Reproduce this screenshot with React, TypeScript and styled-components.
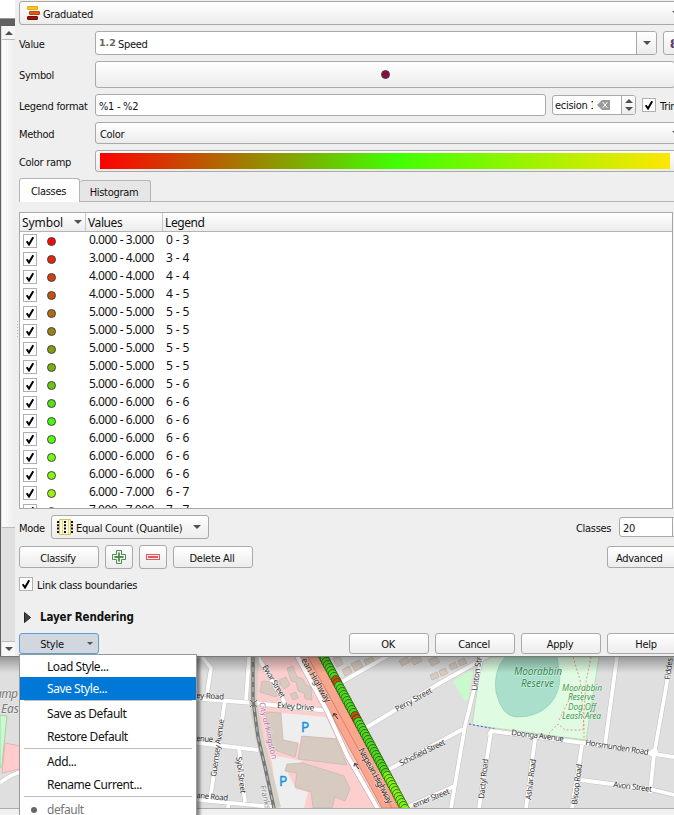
import React from "react";
import styled, { createGlobalStyle, css } from "styled-components";

const Global = createGlobalStyle`
  * { box-sizing: border-box; }
  body { margin: 0; background: #efefef; font-family: "DejaVu Sans Condensed", "DejaVu Sans", sans-serif; font-stretch: condensed; font-size: 11px; color: #111; }
`;

const raised = css`
  border: 1px solid #a9a9a9;
  border-radius: 3px;
  background: linear-gradient(#ffffff, #ececec);
`;

const Screen = styled.div`
  position: relative;
  width: 674px;
  height: 815px;
  overflow: hidden;
  display: flex;
  flex-direction: column;
`;
const Window = styled.div`
  display: flex;
  height: 657px;
  flex: none;
  border-bottom: 1px solid #777;
`;
const Side = styled.div`
  width: 15px;
  flex: none;
  display: flex;
  flex-direction: column;
  background: #606060;
`;
const Corner = styled.div`
  height: 19px;
  background: #fff;
  border-bottom: 1px solid #999;
`;
const Scrollbar = styled.div`
  margin: 7px 0 0 1px;
  padding-left: 1px;
  flex: 1;
  display: flex;
  flex-direction: column;
  background: #e0e0e0;
`;
const ScrollArrow = styled.div<{ $h: number }>`
  height: ${(p) => p.$h}px;
  background: #f6f6f6;
  border: solid #bbb;
  border-width: ${(p) => (p.$h === 14 ? "0 0 1px" : "1px 0 0")};
  display: flex;
  align-items: center;
  justify-content: center;
`;
const Thumb = styled.div`
  height: 488px;
  background: linear-gradient(90deg, #fcfcfc, #eeeeee);
  border-bottom: 1px solid #bbb;
`;
const Track = styled.div`
  flex: 1;
`;
const Panel = styled.div`
  width: 680px;
  flex: none;
  padding: 1px 0 0 4px;
  background: repeating-linear-gradient(#b5b5b5 0 1px, transparent 1px 3px) 2px 321px / 1px 16px no-repeat #efefef;
`;
const Row = styled.div<{ $h: number; $mt?: number }>`
  display: flex;
  height: ${(p) => p.$h}px;
  margin-top: ${(p) => p.$mt ?? 0}px;
`;
const T = styled.span`
  white-space: pre;
  line-height: 15px;
  margin: 1px 0 -1px;
  letter-spacing: -0.3px;
`;
const UiText = styled.span<{ $up?: number; $ls?: number }>`
  font-family: "Noto Sans", sans-serif;
  font-size: 12px;
  line-height: 15px;
  white-space: pre;
  letter-spacing: ${(p) => p.$ls ?? -0.45}px;
  margin-bottom: ${(p) => p.$up ?? 0}px;
`;
const Label = styled.div`
  width: 76px;
  flex: none;
  display: flex;
  align-items: center;
`;
const Wide = styled.div<{ $pad?: number }>`
  ${raised}
  flex: none;
  width: 585px;
  padding-left: ${(p) => p.$pad ?? 4}px;
  display: flex;
  align-items: center;
`;
const GraduatedBox = styled(Wide)`
  width: 672px;
  padding-left: 7px;
  gap: 2px;
`;
const DownSlot = styled.div<{ $mr?: number }>`
  display: flex;
  margin-left: auto;
  margin-right: ${(p) => p.$mr ?? 10}px;
`;
const Field = styled.div<{ $w: number }>`
  width: ${(p) => p.$w}px;
  flex: none;
  border: 1px solid #a9a9a9;
  border-radius: 3px;
  background: #fff;
  display: flex;
  align-items: center;
  padding-left: 3px;
  overflow: hidden;
`;
const NumType = styled.b`
  font-family: "DejaVu Sans", sans-serif;
  font-size: 9.5px;
  font-stretch: normal;
  line-height: 12px;
  color: #666;
  width: 19px;
`;
const ClipText = styled.div`
  width: 38px;
  flex: none;
  display: flex;
  overflow: hidden;
  margin: 0 4px 0 -1px;
  padding-bottom: 1px;
`;
const Stepper = styled.div<{ $w: number }>`
  width: ${(p) => p.$w}px;
  height: 100%;
  margin-left: auto;
  flex: none;
  border-left: 1px solid #a9a9a9;
  background: linear-gradient(#fff, #ececec);
  display: flex;
  align-items: center;
  justify-content: center;
`;
const Epsilon = styled.div`
  ${raised}
  width: 28px;
  margin-left: 6px;
  padding-left: 6px;
  color: #5b4068;
  font: bold 18px/20px "Liberation Serif", serif;
`;
const SymbolButton = styled(Wide)`
  width: 580px;
  padding: 0;
  justify-content: center;
`;
const Ramp = styled.div`
  width: 570px;
  height: 16px;
  background: linear-gradient(90deg, #f00 0%, #40ff00 52%, #ffe600 100%);
`;
const Tabs = styled.div`
  display: flex;
  align-items: flex-end;
  height: 24px;
  margin-top: 6px;
  border-bottom: 1px solid #b4b4b4;
`;
const Tab = styled.div<{ $on?: boolean }>`
  width: ${(p) => (p.$on ? 61 : 71)}px;
  height: ${(p) => (p.$on ? 24 : 21)}px;
  margin-bottom: ${(p) => (p.$on ? -1 : 0)}px;
  padding-right: 2px;
  border: 1px solid #b4b4b4;
  border-width: ${(p) => (p.$on ? "1px 1px 0" : "1px 1px 0 0")};
  border-radius: 3px 3px 0 0;
  background: ${(p) => (p.$on ? "linear-gradient(#fff,#fdfdfd)" : "#e6e6e6")};
  display: flex;
  align-items: center;
  justify-content: center;
`;
const Table = styled.div`
  width: 654px;
  height: 297px;
  margin-top: 10px;
  border: 1px solid #a9a9a9;
  background: #fff;
  overflow: hidden;
`;
const Head = styled.div`
  display: grid;
  grid-template-columns: 66px 77px 1fr;
  height: 19px;
  border-bottom: 1px solid #b4b4b4;
  background: linear-gradient(#fff, #ececec);
`;
const HeadCell = styled.div`
  display: flex;
  align-items: center;
  justify-content: space-between;
  padding: 0 3px 0 2px;
  border-right: 1px solid #c8c8c8;
  &:last-child { border-right: 0; }
`;
const ClassRow = styled.div`
  display: grid;
  grid-template-columns: 24px 42px 77px 1fr;
  height: 18px;
  padding-left: 3px;
  align-items: center;
`;
const CheckBox = styled.span`
  width: 14px;
  height: 14px;
  flex: none;
  border: 1px solid #b0b0b0;
  background: #fff;
  display: flex;
  align-items: center;
  justify-content: center;
`;
const RowCheck = styled(CheckBox)``;
const Dot = styled.i<{ $c: string }>`
  width: 9px;
  height: 9px;
  border-radius: 50%;
  border: 1px solid #444;
  background: ${(p) => p.$c};
`;
const RowDot = styled(Dot)`
  margin: 1px 0 0 0;
`;
const Button = styled.div<{ $w: number; $ml?: number; $on?: boolean }>`
  ${raised}
  width: ${(p) => p.$w}px;
  height: 100%;
  margin-left: ${(p) => p.$ml ?? 0}px;
  flex: none;
  display: flex;
  align-items: center;
  justify-content: center;
  padding-right: 2px;
  ${(p) => p.$on && "background:#d0d7df;border-color:#5ba3d6;"}
`;
const ModeBox = styled(Button)`
  justify-content: flex-start;
  padding-left: 4px;
  gap: 2px;
`;
const ToolButton = styled(Button)`
  height: 24px;
  margin-top: -1px;
  padding: 0;
`;
const Inline = styled.div<{ $w?: number; $gap?: number; $ml?: number }>`
  display: flex;
  align-items: center;
  flex: none;
  width: ${(p) => (p.$w ? p.$w + "px" : "auto")};
  gap: ${(p) => p.$gap ?? 0}px;
  margin-left: ${(p) => p.$ml ?? 0}px;
`;
const Bold = styled.b`
  font-size: 11.5px;
  letter-spacing: -0.15px;
  line-height: 16px;
  white-space: pre;
`;
const MapView = styled.svg`
  display: block;
  width: 674px;
  height: 151px;
  flex: none;
  font-family: "Noto Sans", sans-serif;
  font-stretch: normal;
`;
const StatusBar = styled.div`
  height: 7px;
  border-top: 1px solid #aaa;
  background: #f0f0f0;
`;
const Menu = styled.div`
  position: absolute;
  left: 19px;
  top: 654px;
  width: 178px;
  height: 170px;
  border: 1px solid #999;
  background: #fff;
  box-shadow: 3px 3px 3px rgba(0, 0, 0, 0.45);
`;
const Item = styled.div<{ $on?: boolean; $dim?: boolean }>`
  height: 23px;
  padding-left: 27px;
  display: flex;
  align-items: center;
  background: ${(p) => (p.$on ? "#0078d7" : "transparent")};
  color: ${(p) => (p.$on ? "#fff" : p.$dim ? "#777" : "#111")};
  &:first-child { height: 22px; }
`;
const Bullet = styled.i`
  width: 6px;
  height: 6px;
  border-radius: 50%;
  background: #666;
  margin: 0 10px 0 -16px;
`;
const Sep = styled.div`
  height: 1px;
  margin: 0 4px 1px;
  background: #bdbdbd;
`;

const Arrow = ({ up, w = 8 }: { up?: boolean; w?: number }) => (
  <svg width={w} height={w / 2} viewBox="0 0 8 4">
    <path d={up ? "M0 4L4 0L8 4Z" : "M0 0L4 4L8 0Z"} fill="#505050" />
  </svg>
);
const Tick = () => (
  <svg width="10" height="10" viewBox="0 0 10 10">
    <path d="M1.7 5.2L4 8.5L8.2 1.2" fill="none" stroke="#000" strokeWidth="2" />
  </svg>
);

const classes: [string, string, string][] = [
  ["0.000 - 3.000", "0 - 3", "#f40808"],
  ["3.000 - 4.000", "3 - 4", "#e32410"],
  ["4.000 - 4.000", "4 - 4", "#d2400c"],
  ["4.000 - 5.000", "4 - 5", "#c0540c"],
  ["5.000 - 5.000", "5 - 5", "#ae6c10"],
  ["5.000 - 5.000", "5 - 5", "#9b8110"],
  ["5.000 - 5.000", "5 - 5", "#889a10"],
  ["5.000 - 5.000", "5 - 5", "#78ae10"],
  ["5.000 - 6.000", "5 - 6", "#68c810"],
  ["6.000 - 6.000", "6 - 6", "#55e010"],
  ["6.000 - 6.000", "6 - 6", "#44fa10"],
  ["6.000 - 6.000", "6 - 6", "#58fb10"],
  ["6.000 - 6.000", "6 - 6", "#70fa10"],
  ["6.000 - 6.000", "6 - 6", "#84f610"],
  ["6.000 - 7.000", "6 - 7", "#9cf210"],
  ["7.000 - 7.000", "7 - 7", "#b0f010"],
];

const track = Array.from({ length: 52 }, (_, i) => {
  const t = i / 51;
  const y = 656 + t * 153;
  const orange = (y > 679 && y < 686) || (y > 715 && y < 722);
  return { x: 323 + t * 82, y, c: orange ? "#c2500f" : t > 0.78 ? "#86f21a" : "#55d622" };
});

const Streets = ({ color, width }: { color: string; width: number }) => (
  <g fill="none" stroke={color} strokeWidth={width} strokeLinejoin="round">
    <path d="M202 657L211 668L207 694" />
    <path d="M190 698L254 703L330 711" />
    <path d="M249 657L246 700" />
    <path d="M258 657L285 703" />
    <path d="M225 700L210 800" />
    <path d="M190 742L258 750" />
    <path d="M239 748L245 802" />
    <path d="M190 799L272 807M229 802L228 808" />
    <path d="M340 683L398 650" />
    <path d="M364 729L440 683L490 655" />
    <path d="M388 770L463 729" />
    <path d="M405 808L455 786" />
    <path d="M482 657L465 726L451 808" />
    <path d="M489 735L491 731L584 743L674 757" />
    <path d="M491 732L479 808M535 739L526 808M582 745L572 808" />
    <path d="M617 657L605 745" />
    <path d="M670 665L654 755L650 793" />
    <path d="M581 780L650 789L674 795" />
    <path d="M0 783Q8 776 20 772" />
  </g>
);

const MapLabel = ({ x, y, a = 0, s = 8, w, c = "#333", i, children }: { x: number; y: number; a?: number; s?: number; w: number; c?: string; i?: boolean; children: string }) => (
  <text
    transform={`translate(${x} ${y}) rotate(${a})`}
    fontSize={s}
    textLength={w}
    fontStyle={i ? "italic" : "normal"}
    fill={c}
    stroke="#fff"
    strokeOpacity="0.5"
    strokeWidth="1.2"
    paintOrder="stroke"
  >
    {children}
  </text>
);

const StreetMap = () => (
  <MapView viewBox="0 657 674 151">
    <defs>
      <linearGradient id="shade" x1="0" y1="0" x2="0" y2="1">
        <stop offset="0" stopColor="#000" stopOpacity=".42" />
        <stop offset="1" stopColor="#000" stopOpacity="0" />
      </linearGradient>
    </defs>
    <rect y="657" width="674" height="151" fill="#e0dfdf" />
    <path d="M0 715L7 716L2 765L0 768Z" fill="#c8facc" stroke="#a6cfab" />
    <path d="M5 743L20 746V769L2 773Z" fill="#ffcccb" stroke="#e0b5b5" />
    <path d="M258 657H300L385 808H278L262 735L256 705Z" fill="#fccfce" />
    <path d="M281 713L326 717L336 738L301 736L300 744L281 740Z M271 755L303 761L286 769L296 789L308 792L304 808H278Z" fill="#eeeeee" />
    <g fill="#d6cac1" stroke="#c4b7ad" strokeWidth=".7">
      <path d="M262 681L281 683L276 697L260 692Z" />
      <path d="M266 712L281 713L283 740L298 743L295 757L269 748Z" />
      <path d="M302 736L336 739L347 765L298 759Z" />
      <path d="M287 764L303 763L319 768L344 776L350 789L345 801L335 797L332 808H313L311 792L295 787L297 773L285 771Z" />
      <path d="M287 668L293 666L297 677L303 679L306 685L311 687L312 700L305 699L304 693L298 691L296 682L291 681Z" />
      <path d="M279 680L286 677L290 685L284 689Z M290 694L296 692L298 698L293 700Z" />
    </g>
    <g fill="#d6cac1" stroke="#bcb0a8" strokeWidth=".7">
      <path d="M333 658l7 -1l3 7l-6 3zM342 670l7 -4l3 6l-7 4zM351 664l8 -4l4 6l-8 5zM364 660l8 -3l3 5l-8 5z" />
      <path d="M399 661l8 -4l3 5l-8 4zM410 659l9 -3l3 5l-8 4zM430 675l7 -3l2 5l-7 3zM439 671l6 -3l3 5l-7 3zM449 665l6 -3l3 5l-7 3zM458 661l6 -3l3 5l-7 3z" />
      <path d="M486 658h11l-5 5zM428 660l8 -3l4 5l-8 4z" />
    </g>
    <path d="M453 681L473 669L468 700L465 701Z" fill="#c8facc" />
    <path d="M482 657H599L586 740L472 725Z" fill="#dffce2" stroke="#afd9b2" strokeWidth=".8" />
    <path d="M505 657Q493 671 496 692Q502 717 517 717Q538 717 550 704Q560 693 560 675L557 657Z" fill="#aae0cb" stroke="#8bceb6" strokeWidth=".7" />
    <g fill="none" stroke="#fa8072" strokeDasharray="2 2" strokeWidth=".9">
      <path d="M573 657L580 680L581 688L584 725V740" />
      <path d="M591 657L586 682L583 730H565L558 724L549 733" />
      <path d="M576 686L559 720" />
    </g>
    <path d="M469 724L495 729" fill="none" stroke="#4848ee" strokeDasharray="2 2" strokeWidth="1" />
    <Streets color="#c9c4c2" width={5} />
    <Streets color="#fff" width={3.8} />
    <circle cx="654" cy="753" r="4" fill="#fff" />
    <path d="M255 657L253 702L260 740L268 770L277 808" fill="none" stroke="#d5d0c6" strokeWidth="8" />
    <path d="M253 657V700L258 737L265 767L274 808" fill="none" stroke="#777" strokeWidth="3.4" />
    <path d="M253 657V700L258 737L265 767L274 808" fill="none" stroke="#bbb" strokeWidth="1.2" strokeDasharray="5 5" />
    <path d="M250 700l7 7m0 -7l-7 7" stroke="#777" />
    <path d="M300 657L382 808H404L323 657Z" fill="#faa58d" stroke="#d78872" strokeWidth="1" />
    <path d="M297 656L327 711L348 757L378 809" fill="none" stroke="#bbaaa5" strokeWidth="5.4" />
    <path d="M297 656L327 711L348 757L378 809" fill="none" stroke="#fff" strokeWidth="4.2" />
    <path d="M308 657L360 752L392 808" fill="none" stroke="#d47c66" strokeWidth=".9" />
    <path d="M338 719l-4 -5M333 716.500l.5 -3l3.500 1M359 769l-4 -5M354 766.500l.5 -3l3.500 1" fill="none" stroke="#333" strokeWidth="1" />
    <g stroke="#174d0b" strokeWidth=".75">
      {track.map((p, k) => (
        <circle key={k} cx={p.x} cy={p.y} r="4.5" fill={p.c} />
      ))}
    </g>
    <g>
      <MapLabel x={-5} y={698} s={12} w={23} c="#777" i>amp</MapLabel>
      <MapLabel x={1} y={713} s={12} w={18} c="#777" i>Eas</MapLabel>
      <MapLabel x={196} y={698} a={3} w={28}>ey Road</MapLabel>
      <MapLabel x={196} y={741} a={3} w={17}>enue</MapLabel>
      <MapLabel x={216} y={777} a={-82} w={58}>Guernsey Avenue</MapLabel>
      <MapLabel x={236} y={757} a={83} w={37}>Sybil Street</MapLabel>
      <MapLabel x={196} y={798} a={5} w={32}>ane Road</MapLabel>
      <MapLabel x={262} y={667} a={59} w={37}>Ewar Street</MapLabel>
      <MapLabel x={277} y={708} a={4} w={37}>Exley Drive</MapLabel>
      <MapLabel x={259} y={703} a={77} w={58} c="#b070b0">City of Kingston</MapLabel>
      <MapLabel x={260} y={786} a={77} w={24} c="#888">Franks</MapLabel>
      <MapLabel x={301} y={660} a={60} s={9} w={50}>ean Highway</MapLabel>
      <MapLabel x={358} y={750} a={61} s={9} w={62}>Nepean Highway</MapLabel>
      <MapLabel x={397} y={712} a={-29} w={41}>Perry Street</MapLabel>
      <MapLabel x={401} y={766} a={-26} w={50}>Schofield Street</MapLabel>
      <MapLabel x={414} y={808} a={-22} w={39}>erner Street</MapLabel>
      <MapLabel x={477} y={691} a={-82} w={34}>Linton Str</MapLabel>
      <MapLabel x={511} y={735} a={7} w={53}>Doonga Avenue</MapLabel>
      <MapLabel x={585} y={745} a={9} w={64}>Horsmunden Road</MapLabel>
      <MapLabel x={484} y={799} a={-84} w={40}>Dactyl Road</MapLabel>
      <MapLabel x={531} y={800} a={-83} w={41}>Ashlar Road</MapLabel>
      <MapLabel x={577} y={805} a={-83} w={41}>Biscop Road</MapLabel>
      <MapLabel x={613} y={787} a={7} w={39}>Avon Street</MapLabel>
      <MapLabel x={670} y={680} a={-83} w={22}>Fiddes</MapLabel>
      <MapLabel x={514} y={675} s={10} w={48} c="#2f8a4e" i>Moorabbin</MapLabel>
      <MapLabel x={521} y={687} s={10} w={33} c="#2f8a4e" i>Reserve</MapLabel>
      <MapLabel x={562} y={691} s={8.4} w={40} c="#3d9a4c" i>Moorabbin</MapLabel>
      <MapLabel x={568} y={700} s={8.4} w={27} c="#3d9a4c" i>Reserve</MapLabel>
      <MapLabel x={568} y={710} s={8.4} w={28} c="#3d9a4c" i>Dog Off</MapLabel>
      <MapLabel x={562} y={719} s={8.4} w={39} c="#3d9a4c" i>Leash Area</MapLabel>
    </g>
    <g fill="#1b93dc" stroke="#1b93dc" strokeWidth=".4" fontSize="13.5">
      <text x="301" y="732">P</text>
      <text x="279" y="786">P</text>
    </g>
    <rect y="657" width="674" height="16" fill="url(#shade)" opacity=".75" />
  </MapView>
);

export default function App() {
  return (
    <Screen>
      <Global />
      <Window>
        <Side>
          <Corner />
          <Scrollbar>
            <ScrollArrow $h={14}><Arrow up /></ScrollArrow>
            <Thumb />
            <Track />
            <ScrollArrow $h={15}><Arrow /></ScrollArrow>
          </Scrollbar>
        </Side>
        <Panel>
          <Row $h={24}>
            <GraduatedBox>
              <svg width="14" height="14" viewBox="0 0 14 14">
                <rect x=".5" y=".5" width="10" height="3" rx=".4" fill="#fccb18" stroke="#e2a90c" />
                <rect x="2.5" y="5.5" width="10" height="3" rx=".4" fill="#e35b18" stroke="#bd4208" />
                <rect x=".5" y="10.5" width="10" height="3" rx=".4" fill="#9c130c" stroke="#760a04" />
              </svg>
              <T>Graduated</T>
              <DownSlot><Arrow /></DownSlot>
            </GraduatedBox>
          </Row>
          <Row $h={24} $mt={6}>
            <Label><T>Value</T></Label>
            <Field $w={562}>
              <NumType>1.2</NumType>
              <T>Speed</T>
              <Stepper $w={20}><Arrow /></Stepper>
            </Field>
            <Epsilon>ε</Epsilon>
          </Row>
          <Row $h={27} $mt={6}>
            <Label><T>Symbol</T></Label>
            <SymbolButton><Dot $c="#900848" /></SymbolButton>
          </Row>
          <Row $h={22} $mt={6}>
            <Label><T>Legend format</T></Label>
            <Field $w={451}><T>%1 - %2</T></Field>
            <Inline $ml={6}>
              <Row $h={20}>
                <Field $w={84}>
                  <ClipText><T>ecision 1</T></ClipText>
                  <svg width="14" height="10" viewBox="0 0 14 10">
                    <path d="M5 0H13V10H5L0 5Z" fill="#999" />
                    <path d="M5.5 2L10.5 8M10.5 2L5.5 8" stroke="#fff" />
                  </svg>
                  <Stepper $w={14}>
                    <svg width="8" height="12" viewBox="0 0 8 12">
                      <path d="M0 4L4 0L8 4ZM0 8L4 12L8 8Z" fill="#505050" />
                    </svg>
                  </Stepper>
                </Field>
              </Row>
            </Inline>
            <Inline $ml={6} $gap={4}><CheckBox><Tick /></CheckBox><T>Trim</T></Inline>
          </Row>
          <Row $h={22} $mt={6}>
            <Label><T>Method</T></Label>
            <Wide><T>Color</T><DownSlot $mr={-1}><Arrow /></DownSlot></Wide>
          </Row>
          <Row $h={22} $mt={6}>
            <Label><T>Color ramp</T></Label>
            <Wide><Ramp /></Wide>
          </Row>
          <Tabs>
            <Tab $on><T>Classes</T></Tab>
            <Tab><T>Histogram</T></Tab>
          </Tabs>
          <Table>
            <Head>
              <HeadCell><UiText $ls={-0.1}>Symbol</UiText><Arrow /></HeadCell>
              <HeadCell><UiText $ls={-0.4}>Values</UiText></HeadCell>
              <HeadCell><UiText $ls={-0.4}>Legend</UiText></HeadCell>
            </Head>
            {classes.map(([v, l, c], k) => (
              <ClassRow key={k}>
                <RowCheck><Tick /></RowCheck>
                <RowDot $c={c} />
                <UiText $up={3} $ls={-0.5}>{v}</UiText>
                <UiText $up={3} $ls={-0.1}>{l}</UiText>
              </ClassRow>
            ))}
          </Table>
          <Row $h={24} $mt={6}>
            <Inline $w={32}><T>Mode</T></Inline>
            <ModeBox $w={158}>
              <svg width="18" height="16" viewBox="0 0 18 16">
                <path d="M3.5 .5H14.5V15.5H3.5Z" fill="#fffce6" stroke="#d5c34b" />
                <path d="M6.5 1V15M12.500 1V15" stroke="#e6da88" />
                <path d="M2 2V14M9 2V14M16 2V14" stroke="#111" strokeWidth="2" strokeDasharray="2 1.3" />
              </svg>
              <T>Equal Count (Quantile)</T>
              <DownSlot $mr={5}><Arrow /></DownSlot>
            </ModeBox>
            <Inline $ml={367} $w={43}><T>Classes</T></Inline>
            <Inline>
              <Row $h={20}><Field $w={70}><T>20</T><Stepper $w={16} /></Field></Row>
            </Inline>
          </Row>
          <Row $h={22} $mt={7}>
            <Button $w={80}><T>Classify</T></Button>
            <ToolButton $w={28} $ml={6}>
              <svg width="14" height="14" viewBox="0 0 14 14">
                <path d="M4.5 .5H9.5V4.5H13.5V9.5H9.5V13.500H4.5V9.5H.5V4.5H4.5Z" fill="#f0f7f0" stroke="#4f8a50" />
                <path d="M7 2.5V11.500M2.5 7H11.500" stroke="#4f8a50" strokeWidth="1.8" />
              </svg>
            </ToolButton>
            <ToolButton $w={28} $ml={6}>
              <svg width="14" height="6" viewBox="0 0 14 6">
                <rect x=".5" y=".5" width="13" height="5" fill="#fde8e8" stroke="#dd5a60" />
                <path d="M2 3H12" stroke="#dd5a60" strokeWidth="2" />
              </svg>
            </ToolButton>
            <Button $w={80} $ml={6}><T>Delete All</T></Button>
            <Button $w={80} $ml={354}><Inline $w={60}><T>Advanced</T></Inline></Button>
          </Row>
          <Row $h={14} $mt={9}>
            <Inline $gap={4}><CheckBox><Tick /></CheckBox><T>Link class boundaries</T></Inline>
          </Row>
          <Row $h={16} $mt={18}>
            <Inline $ml={5} $gap={9}>
              <svg width="7" height="11" viewBox="0 0 7 11"><path d="M.5 .5L6.5 5.5L.5 10.5Z" fill="#444" stroke="#222" /></svg>
              <Bold>Layer Rendering</Bold>
            </Inline>
          </Row>
          <Row $h={21} $mt={8}>
            <Button $w={80} $on><Inline $ml={17} $gap={23}><T>Style</T><Arrow w={6} /></Inline></Button>
            <Button $w={80} $ml={250}><T>OK</T></Button>
            <Button $w={80} $ml={6}><T>Cancel</T></Button>
            <Button $w={80} $ml={6}><T>Apply</T></Button>
            <Button $w={80} $ml={6}><T>Help</T></Button>
          </Row>
        </Panel>
      </Window>
      <StreetMap />
      <StatusBar />
      <Menu>
        <Item><UiText>Load Style...</UiText></Item>
        <Item $on><UiText>Save Style...</UiText></Item>
        <Sep />
        <Item><UiText>Save as Default</UiText></Item>
        <Item><UiText>Restore Default</UiText></Item>
        <Sep />
        <Item><UiText>Add...</UiText></Item>
        <Item><UiText>Rename Current...</UiText></Item>
        <Sep />
        <Item $dim><Bullet /><UiText>default</UiText></Item>
      </Menu>
    </Screen>
  );
}
